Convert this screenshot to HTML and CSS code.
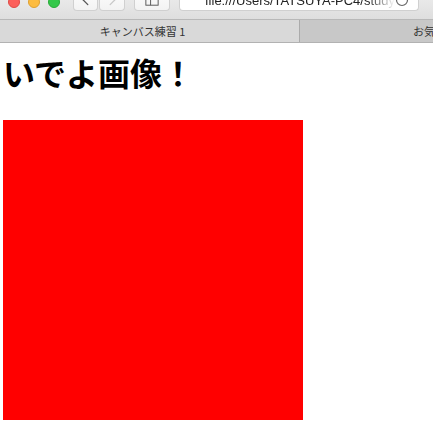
FILE: index.html
```html
<!DOCTYPE html>
<html lang="ja">
<head>
<meta charset="utf-8">
<title>キャンバス練習 1</title>
<link rel="stylesheet" href="styles.css">
</head>
<body>
<div class="chrome">
  <div class="toolbar">
    <div class="toolbar-row">
      <div class="lights">
        <span class="light red"></span>
        <span class="light yellow"></span>
        <span class="light green"></span>
      </div>
      <div class="nav">
        <div class="btn back">
          <svg width="25" height="22" viewBox="0 0 25 22"><path d="M15 6 L10 11 L15 16" fill="none" stroke="#555" stroke-width="1.4" stroke-linecap="round"/></svg>
        </div>
        <div class="btn fwd">
          <svg width="26" height="22" viewBox="0 0 26 22"><path d="M11 6 L16 11 L11 16" fill="none" stroke="#c8c8c8" stroke-width="1.4" stroke-linecap="round"/></svg>
        </div>
      </div>
      <div class="btn side">
        <svg width="36" height="22" viewBox="0 0 36 22"><rect x="11.5" y="6.5" width="13" height="10" fill="none" stroke="#555" stroke-width="1"/><line x1="16.5" y1="6.5" x2="16.5" y2="16.5" stroke="#555" stroke-width="1"/></svg>
      </div>
      <div class="address">
        <span class="url">file:///Users/TATSUYA-PC4/study</span>
        <svg class="reload" width="14" height="22" viewBox="0 0 14 22"><circle cx="7" cy="11" r="5.5" fill="none" stroke="#666" stroke-width="1.2"/></svg>
      </div>
    </div>
  </div>
  <div class="tabs">
    <div class="tab active">キャンバス練習 1</div>
    <div class="tab inactive">お気に入り</div>
  </div>
</div>
<main class="page">
  <h1 class="title">いでよ画像！</h1>
  <div class="canvas"></div>
</main>
</body>
</html>
```
FILE: styles.css
```css
* { box-sizing: border-box; }
html, body { margin: 0; padding: 0; background: #fff; }
body { width: 433px; height: 447px; overflow: hidden; font-family: "Noto Sans CJK JP", "Noto Sans", sans-serif; }

.chrome { width: 433px; }
.toolbar {
  height: 20px;
  background: linear-gradient(#e9e9e9, #dedede);
  border-bottom: 1px solid #b8b8b8;
  overflow: hidden;
}
.toolbar-row {
  display: flex;
  align-items: flex-start;
  margin-top: -11px;
  padding-left: 8px;
}
.lights { display: flex; gap: 8px; margin-top: 7px; }
.light { width: 12px; height: 12px; border-radius: 50%; display: block; }
.red { background: #fc605b; border: 1px solid #de4a45; }
.yellow { background: #fdbc40; border: 1px solid #dea030; }
.green { background: #34c84a; border: 1px solid #27aa37; }

.btn {
  height: 22px;
  background: linear-gradient(#fdfdfd, #f3f3f3);
  border: 1px solid #d0d0d0;
  border-top: none;
  border-radius: 4px;
  display: flex;
}
.nav { display: flex; gap: 1px; margin-left: 13px; }
.back { width: 25px; }
.fwd { width: 26px; }
.side { width: 36px; margin-left: 9px; }
.address {
  width: 240px;
  height: 22px;
  margin-left: 9px;
  background: #fff;
  border: 1px solid #d0d0d0;
  border-top: none;
  border-radius: 4px;
  display: flex;
  align-items: center;
  padding-left: 25px;
  padding-right: 9px;
  font-family: "Liberation Sans", Arial, sans-serif;
  font-size: 13px;
  color: #222;
  overflow: hidden;
}
.url {
  flex: 1;
  white-space: nowrap;
  overflow: hidden;
  padding-top: 2px;
  -webkit-mask-image: linear-gradient(90deg, #000 85%, transparent);
  mask-image: linear-gradient(90deg, #000 85%, transparent);
}
.reload { flex: none; }

.tabs {
  display: flex;
  height: 23px;
  border-bottom: 1px solid #b2b2b2;
  font-size: 11px;
  color: #333;
}
.tab {
  display: flex;
  align-items: center;
  white-space: nowrap;
  overflow: hidden;
}
.active {
  width: 299px;
  background: #d9d9d9;
  justify-content: center;
  padding-right: 14px;
}
.inactive {
  flex: 1;
  background: #c8c8c8;
  border-left: 1px solid #ababab;
  padding-left: 113px;
}

.page { padding-left: 3px; }
.title {
  margin: 9px 0 28px 0;
  font-size: 32px;
  line-height: 40px;
  font-weight: 700;
  color: #000;
  font-family: "Noto Sans CJK JP", sans-serif;
}
.canvas {
  width: 300px;
  height: 300px;
  background: #ff0000;
}
```
